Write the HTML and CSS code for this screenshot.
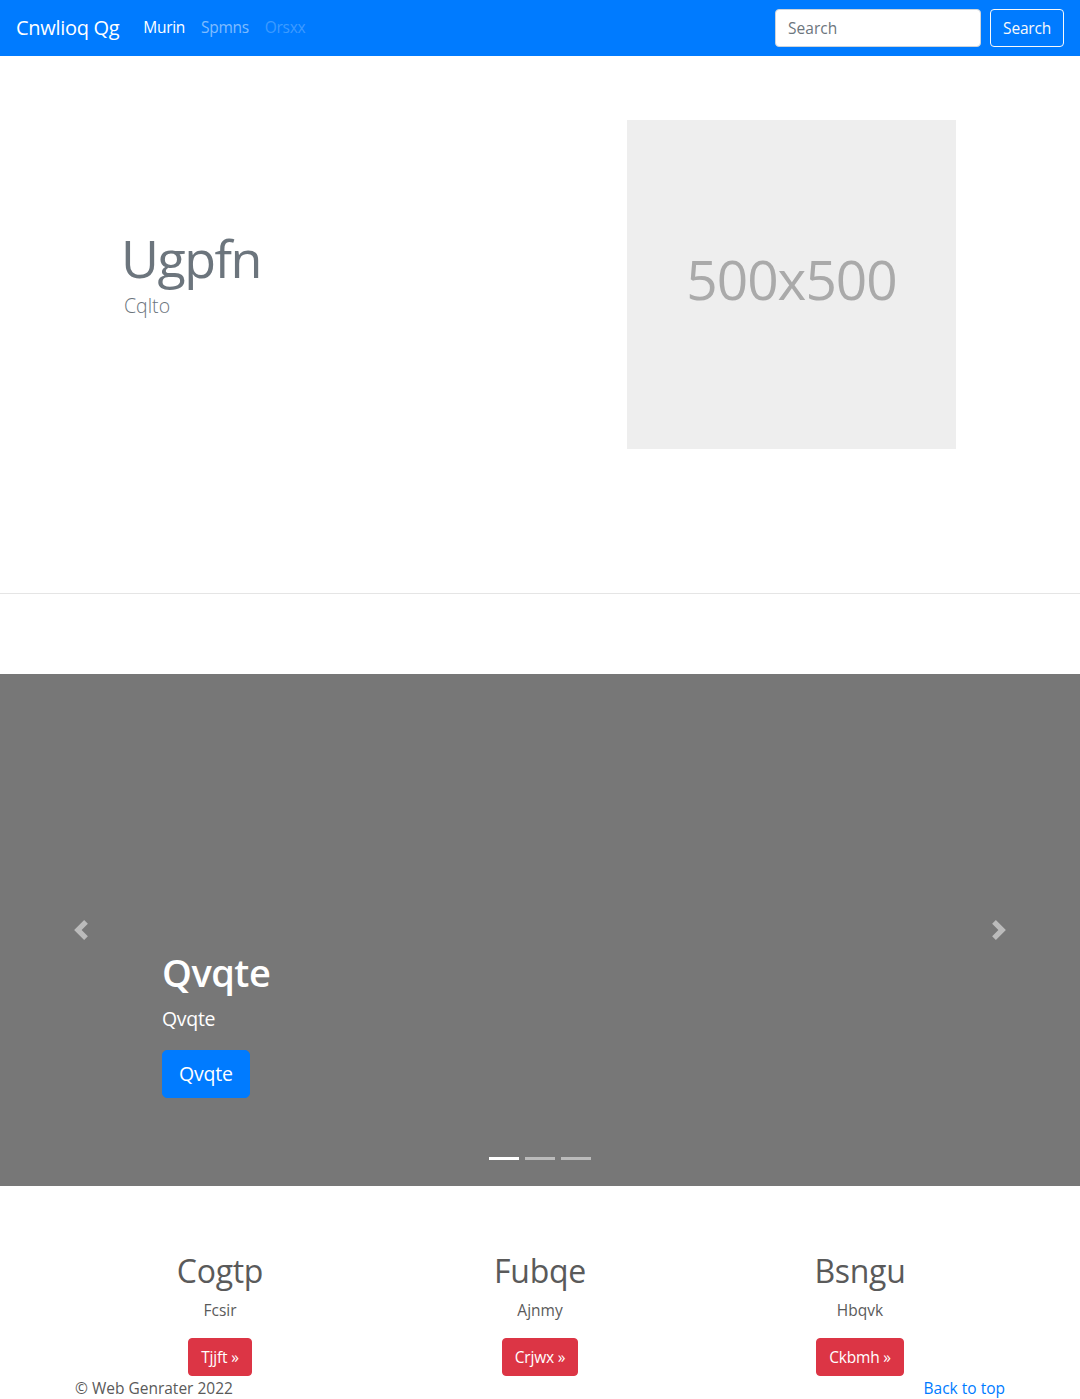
FILE: index.html
```html
<!DOCTYPE html>
<html lang="en">
<head>
<meta charset="utf-8">
<title>Cnwlioq Qg</title>
<link rel="stylesheet" href="styles.css">
</head>
<body>
<nav class="navbar">
  <a class="brand" href="#">Cnwlioq Qg</a>
  <ul class="nav">
    <li><a class="nav-link active" href="#">Murin</a></li>
    <li><a class="nav-link" href="#">Spmns</a></li>
    <li><a class="nav-link disabled" href="#">Orsxx</a></li>
  </ul>
  <form class="search">
    <input class="search-input" type="text" placeholder="Search">
    <button class="btn btn-outline-light" type="button">Search</button>
  </form>
</nav>

<section class="hero">
  <div class="hero-text">
    <h1 class="hero-title">Ugpfn</h1>
    <p class="hero-lead">Cqlto</p>
  </div>
  <div class="placeholder">500x500</div>
</section>
<hr class="divider">

<section class="carousel">
  <div class="caption">
    <h1 class="caption-title">Qvqte</h1>
    <p class="caption-text">Qvqte</p>
    <a class="btn btn-lg btn-primary" href="#">Qvqte</a>
  </div>
  <a class="control control-prev" href="#">
    <svg class="control-icon" viewBox="0 0 8 8" width="20" height="20"><path d="M5.25 0l-4 4 4 4 1.5-1.5L4.25 4l2.5-2.5L5.25 0z" fill="#fff"/></svg>
  </a>
  <a class="control control-next" href="#">
    <svg class="control-icon" viewBox="0 0 8 8" width="20" height="20"><path d="M2.75 0l-1.5 1.5L3.75 4l-2.5 2.5L2.75 8l4-4-4-4z" fill="#fff"/></svg>
  </a>
  <ol class="indicators">
    <li class="ind active"></li>
    <li class="ind"></li>
    <li class="ind"></li>
  </ol>
</section>

<section class="marketing">
  <div class="col">
    <h2 class="col-title">Cogtp</h2>
    <p class="col-text">Fcsir</p>
    <a class="btn btn-danger" href="#">Tjjft »</a>
  </div>
  <div class="col">
    <h2 class="col-title">Fubqe</h2>
    <p class="col-text">Ajnmy</p>
    <a class="btn btn-danger" href="#">Crjwx »</a>
  </div>
  <div class="col">
    <h2 class="col-title">Bsngu</h2>
    <p class="col-text">Hbqvk</p>
    <a class="btn btn-danger" href="#">Ckbmh »</a>
  </div>
</section>

<footer class="footer">
  <p class="copy">© Web Genrater 2022</p>
  <a class="back" href="#">Back to top</a>
</footer>
</body>
</html>
```

FILE: styles.css
```css
* { box-sizing: border-box; }

html, body {
  margin: 0;
  padding: 0;
}

body {
  font-family: "Open Sans", "Noto Sans", "Liberation Sans", sans-serif;
  font-size: 16px;
  line-height: 1.5;
  color: #5a5a5a;
  background: #fff;
  overflow: hidden;
}

a { text-decoration: none; }

/* navbar */
.navbar {
  height: 56px;
  background: #007bff;
  display: flex;
  align-items: center;
  padding: 8px 16px;
}

.brand {
  color: #fff;
  font-size: 20px;
  line-height: 30px;
  margin-right: 16px;
  letter-spacing: -0.3px;
}

.nav {
  list-style: none;
  margin: 0;
  padding: 0;
  display: flex;
  flex: 1;
}

.nav-link {
  display: block;
  padding: 8px;
  color: rgba(255, 255, 255, 0.5);
  font-size: 15.5px;
  letter-spacing: -0.3px;
}

.nav-link.active { color: #fff; }
.nav-link.disabled { color: rgba(255, 255, 255, 0.25); }

.search {
  display: flex;
  align-items: center;
}

.search-input {
  width: 206px;
  height: 38px;
  padding: 6px 12px;
  font-family: inherit;
  font-size: 15.5px;
  color: #495057;
  border: 1px solid #ced4da;
  border-radius: 4px;
  margin-right: 9px;
  background: #fff;
}

.search-input::placeholder { color: #6c757d; }

.btn {
  display: inline-block;
  font-family: inherit;
  font-size: 15.5px;
  line-height: 24px;
  padding: 6px 12px;
  border: 1px solid transparent;
  border-radius: 4px;
  letter-spacing: -0.2px;
}

.btn-outline-light {
  color: #f8f9fa;
  border-color: #f8f9fa;
  background: transparent;
  height: 38px;
}

.btn-lg {
  font-size: 19.5px;
  line-height: 30px;
  padding: 8px 16px;
  border-radius: 5px;
}

.btn-primary {
  color: #fff;
  background: #007bff;
  border-color: #007bff;
}

.btn-danger {
  color: #fff;
  background: #dc3545;
  border-color: #dc3545;
}

/* hero */
.hero {
  display: flex;
  align-items: flex-start;
  padding: 64px 124px 144px 121px;
}

.hero-text {
  flex: 1;
  margin-top: 108px;
}

.hero-title {
  margin: 0;
  font-size: 52px;
  font-weight: 400;
  line-height: 60px;
  color: #6c757d;
  letter-spacing: -1.5px;
}

.hero-lead {
  margin: 3px 0 0;
  font-size: 19.5px;
  font-weight: 300;
  line-height: 30px;
  color: #6c757d;
  padding-left: 3px;
}

.placeholder {
  width: 329px;
  height: 329px;
  background: #eeeeee;
  color: #aaaaaa;
  font-size: 55px;
  display: flex;
  align-items: center;
  justify-content: center;
  letter-spacing: -1px;
  padding-bottom: 10px;
}

.divider {
  margin: 0;
  border: 0;
  border-top: 1px solid rgba(0, 0, 0, 0.1);
}

/* carousel */
.carousel {
  position: relative;
  margin-top: 80px;
  height: 512px;
  background: #777777;
  display: flex;
  flex-direction: column;
  justify-content: flex-end;
  padding: 0 162px 88px;
}

.caption {
  position: relative;
  z-index: 2;
  color: #fff;
}

.caption-title {
  margin: 0 0 8px;
  font-size: 38px;
  font-weight: 600;
  line-height: 48px;
  letter-spacing: -0.5px;
}

.caption-text {
  margin: 0 0 16px;
  font-size: 19.5px;
  line-height: 30px;
  letter-spacing: -0.3px;
}

.control {
  position: absolute;
  top: 0;
  bottom: 0;
  width: 162px;
  display: flex;
  align-items: center;
  justify-content: center;
  opacity: 0.5;
}

.control-prev { left: 0; }
.control-next { right: 0; }

.control-icon { display: block; }

.indicators {
  position: absolute;
  left: 0;
  right: 0;
  bottom: 0;
  margin: 0 0 16px;
  padding: 0;
  list-style: none;
  display: flex;
  justify-content: center;
}

.ind {
  width: 30px;
  height: 3px;
  margin: 0 3px;
  background: #fff;
  opacity: 0.5;
  box-sizing: content-box;
  border-top: 10px solid transparent;
  border-bottom: 10px solid transparent;
  background-clip: padding-box;
}

.ind.active { opacity: 1; }

/* marketing */
.marketing {
  width: 960px;
  margin: 66px auto 0;
  display: grid;
  grid-template-columns: repeat(3, 1fr);
}

.col {
  padding: 0 15px;
  text-align: center;
}

.col-title {
  margin: 0 0 8px;
  font-size: 32px;
  font-weight: 400;
  line-height: 38px;
  letter-spacing: -0.3px;
}

.col-text {
  margin: 0 0 16px;
  font-size: 15.5px;
  line-height: 24px;
}

/* footer */
.footer {
  width: 960px;
  margin: 0 auto;
  padding: 0 15px;
  display: flex;
  justify-content: space-between;
}

.copy {
  margin: 0;
  font-size: 15.5px;
  line-height: 24px;
}

.back {
  color: #007bff;
  font-size: 15.5px;
  line-height: 24px;
}
```
